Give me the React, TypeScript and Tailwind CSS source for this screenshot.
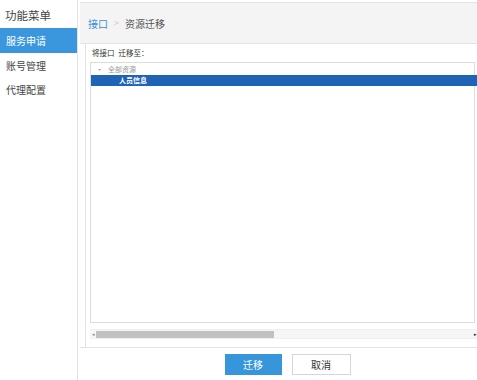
const MENU = ["服务申请", "账号管理", "代理配置"];

export default function App() {
  return (
    <div className="flex h-[380px] w-[477px] overflow-hidden bg-white font-['Noto_Sans_CJK_SC',sans-serif] text-[#333]">
      <aside className="w-[78px] shrink-0 border-r border-[#e2e2e2]">
        <div className="flex h-[28px] items-center pl-[5px] pt-[4px] text-[11.5px] text-[#444]">
          功能菜单
        </div>
        {MENU.map((item, i) => (
          <div
            key={item}
            className={
              i === 0
                ? "flex h-[25px] items-center bg-[#3a97dd] pl-[6px] text-[10px] text-white"
                : "flex h-[24px] items-center pl-[6px] text-[10px] text-[#444]"
            }
          >
            {item}
          </div>
        ))}
      </aside>

      <main className="flex min-w-0 flex-1 flex-col pl-[2px]">
        <div className="mt-[2px] flex h-[42px] shrink-0 items-center gap-[6px] border-y border-[#e3e3e3] bg-[#f4f4f4] pl-[8px] text-[10px]">
          <span className="text-[#3a8ed6]">接口</span>
          <span className="text-[9px] text-[#c8c8c8]">&gt;</span>
          <span className="text-[#555]">资源迁移</span>
        </div>

        <div className="ml-[5px] flex min-h-0 flex-1 flex-col border-l border-[#e3e3e3] pl-[4px] pr-[2px]">
          <div className="flex h-[18px] items-center gap-[4px] pl-[2px] text-[7.5px] text-[#333]">
            <span>将接口</span>
            <span>迁移至：</span>
          </div>
          <div className="h-[261px] border border-[#dcdcdc]">
            <div className="flex h-[12px] items-center pl-[6px] text-[7px] text-[#999]">
              <span className="mr-[6px] text-[5px] text-[#888]">▪</span>
              全部资源
            </div>
            <div className="mr-[-3px] flex h-[11px] items-center bg-[#1f63b6] pl-[28px] text-[7px] font-semibold text-white">
              人员信息
            </div>
          </div>
          <div className="mr-[-2px] mt-[6px] flex h-[10px] items-center border-y border-[#f0f0f0] bg-[#f6f6f6]">
            <span className="w-[6px] text-center text-[5px] text-[#888]">◂</span>
            <div className="h-[7px] w-[178px] bg-[#c1c1c1]" />
            <div className="flex-1" />
            <span className="w-[4px] text-center text-[5px] text-[#222]">▸</span>
          </div>
        </div>

        <footer className="flex h-[33px] shrink-0 items-center justify-center gap-[10px] border-t border-[#e3e3e3] pl-[18px]">
          <button className="h-[21px] w-[57px] bg-[#3795dc] text-[10px] text-white">
            迁移
          </button>
          <button className="h-[21px] w-[59px] border border-[#d6d6d6] bg-white text-[10px] text-[#333]">
            取消
          </button>
        </footer>
      </main>
    </div>
  );
}
